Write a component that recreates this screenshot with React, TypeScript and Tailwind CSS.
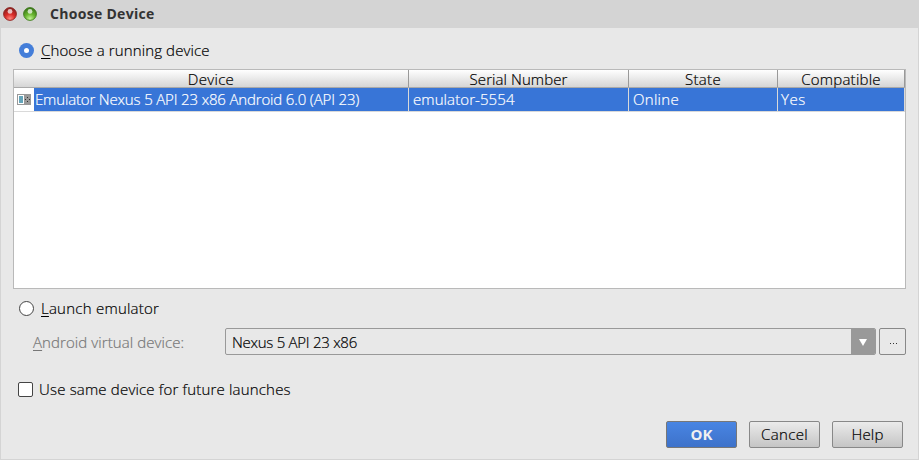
import React from "react";

const headers = [
  { label: "Device", cls: "w-[395px] tracking-[0.3px]" },
  { label: "Serial Number", cls: "w-[220px] tracking-[0.08px]" },
  { label: "State", cls: "w-[149px] tracking-[0.3px]" },
  { label: "Compatible", cls: "w-[127px] tracking-[0.25px]" },
];

function WindowDot({ id, dark, mid, light }: { id: string; dark: string; mid: string; light: string }) {
  return (
    <svg width="14" height="14" viewBox="0 0 14 14" className="block">
      <defs>
        <radialGradient id={id} cx="50%" cy="88%" r="80%">
          <stop offset="0" stopColor={light} />
          <stop offset="0.5" stopColor={mid} />
          <stop offset="1" stopColor={dark} />
        </radialGradient>
      </defs>
      <circle cx="7" cy="7" r="6.4" fill={`url(#${id})`} stroke={dark} strokeWidth="0.9" />
      <ellipse cx="7" cy="4.4" rx="2.4" ry="2.3" fill="#fff" opacity="0.7" />
    </svg>
  );
}

export default function App() {
  return (
    <div className="flex h-[460px] w-[919px] flex-col overflow-hidden whitespace-nowrap bg-[#d4d4d4] font-['Open_Sans','Noto_Sans',sans-serif] text-[15px] font-light leading-[20px] text-black [-webkit-text-stroke:0.2px]">
      <header className="flex h-7 shrink-0 items-center pl-[3px]">
        <WindowDot id="close" dark="#8e2320" mid="#d92b27" light="#ff8a80" />
        <div className="w-[6px]" />
        <WindowDot id="zoom" dark="#3e7a1c" mid="#68b52e" light="#c5f59a" />
        <h1 className="ml-[13px] text-[14px] font-bold leading-[20px] tracking-[0.3px] text-[#333] [-webkit-text-stroke:0px]">Choose Device</h1>
      </header>
      <main className="mx-px mb-px flex h-[431px] flex-col bg-[#e8e8e8]">
        <label className="flex h-[41px] items-center pl-[18px] pt-[3px]">
          <span className="flex size-[15px] items-center justify-center rounded-full bg-[#447ed9]">
            <span className="size-[5px] rounded-full bg-white" />
          </span>
          <span className="-mt-px ml-[7px] tracking-[0.12px]"><u className="decoration-1 underline-offset-2">C</u>hoose a running device</span>
        </label>
        <section className="ml-3 h-[220px] w-[893px] shrink-0 border border-[#b9b9b9] bg-white">
          <div className="flex h-[18px] border-b border-[#a9a9a9] bg-linear-to-b from-white to-[#d5d5d5]">
            {headers.map((h) => (
              <div key={h.label} className={`${h.cls} flex h-[17px] items-center justify-center border-r border-[#999]`}>{h.label}</div>
            ))}
          </div>
          <div className="flex h-6 border-b border-[#d9d9d9]">
            <div className="flex w-5 items-center pl-[3px]">
              <svg width="14" height="11" viewBox="0 0 14 11" shapeRendering="crispEdges">
                <path d="M0 0h14v11H0z" fill="#999" />
                <path d="M1 1h6v9H1z" fill="#fff" />
                <path d="M2 2h4v7H2z" fill="#65a5ba" />
                <path d="M10 3h1v1h-1zM8 5h1v1H8zM12 5h1v1h-1zM10 7h1v1h-1z" fill="#333" />
              </svg>
            </div>
            <div className="flex h-[23px] w-[871px] items-center bg-[#3875d7] text-white">
              <div className="h-full w-[375px] border-r border-[#d9d9d9] pl-px pt-px tracking-[-0.16px]">Emulator Nexus 5 API 23 x86 Android 6.0 (API 23)</div>
              <div className="h-full w-[220px] border-r border-[#d9d9d9] pl-1 pt-px tracking-[0.09px]">emulator-5554</div>
              <div className="h-full w-[149px] border-r border-[#d9d9d9] pl-1 pt-px tracking-[0.3px]">Online</div>
              <div className="h-full w-[127px] border-r border-[#d9d9d9] pl-[3px] pt-px tracking-[0.5px]">Yes</div>
            </div>
          </div>
        </section>
        <label className="flex h-[39px] items-center pl-[18px]">
          <span className="size-[15px] rounded-full border border-[#444] bg-white" />
          <span className="-mt-0.5 ml-[7px] tracking-[0.24px]"><u className="decoration-1 underline-offset-2">L</u>aunch emulator</span>
        </label>
        <div className="flex h-[27px] items-center pl-8">
          <span className="w-[192px] tracking-[0.08px] text-[#777]"><u className="decoration-1 underline-offset-2">A</u>ndroid virtual device:</span>
          <div className="flex h-[27px] w-[651px] items-center overflow-hidden rounded-[2px] border border-[#999] pl-[6px]">
            <span className="flex-1 tracking-[-0.27px]">Nexus 5 API 23 x86</span>
            <span className="flex h-full w-6 items-center justify-center bg-[#999]">
              <svg width="8" height="7" viewBox="0 0 8 7" className="mt-px"><path d="M0 0h8L4 7Z" fill="#fff" /></svg>
            </span>
          </div>
          <button className="ml-[3px] flex h-[27px] w-[27px] items-center justify-center gap-[2px] rounded-[2px] border border-[#888] pl-px pt-[3px]">
            <i className="size-px bg-[#333]" /><i className="size-px bg-[#333]" /><i className="size-px bg-[#333]" />
          </button>
        </div>
        <label className="mt-[24px] flex h-[20px] items-center pl-[17px]">
          <span className="size-[15px] rounded-[2px] border border-[#444] bg-white" />
          <span className="ml-[6px] tracking-[0.18px]">Use same device for future launches</span>
        </label>
        <footer className="mt-[22px] flex justify-end gap-3 pr-[15px]">
          <button className="h-[27px] w-[71px] rounded-[2px] border border-[#777] bg-linear-to-b from-[#4985e3] to-[#3d72ca] text-[15px] font-bold leading-[25px] text-[#f0f0f0] [-webkit-text-stroke:0px]">OK</button>
          <button className="h-[27px] w-[71px] rounded-[2px] border border-[#888] bg-linear-to-b from-[#ebebeb] to-[#c5c5c5] leading-[25px] tracking-[0.35px]">Cancel</button>
          <button className="h-[27px] w-[71px] rounded-[2px] border border-[#888] bg-linear-to-b from-[#ebebeb] to-[#c5c5c5] leading-[25px] tracking-[0.2px]">Help</button>
        </footer>
      </main>
    </div>
  );
}
